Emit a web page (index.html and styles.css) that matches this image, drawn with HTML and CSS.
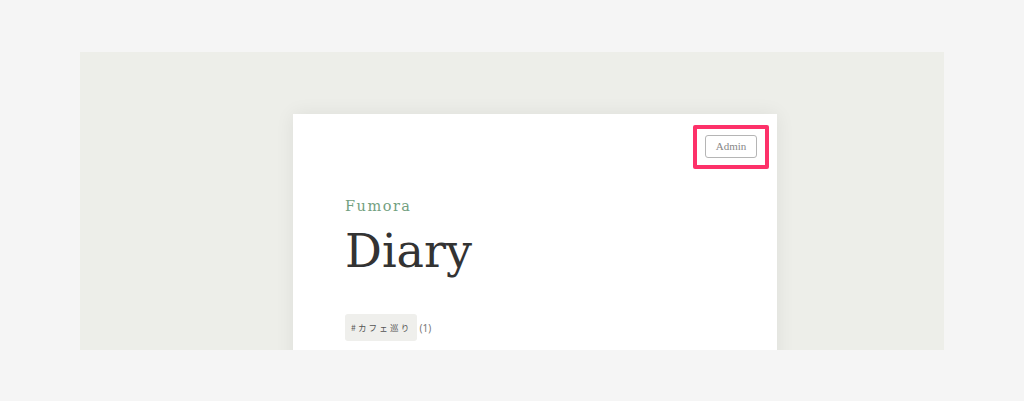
FILE: index.html
```html
<!DOCTYPE html>
<html lang="ja">

<head>
    <meta charset="UTF-8">
    <meta name="viewport" content="width=device-width, initial-scale=1.0">
    <title>Fumora Diary</title>
    <link rel="stylesheet" href="styles.css">
</head>

<body>
    <div class="stage">
        <div class="diary-card">
            <div class="card-top">
                <div class="highlight">
                    <a class="admin-btn" href="#">Admin</a>
                </div>
            </div>

            <p class="site-name">Fumora</p>
            <h1 class="page-title">Diary</h1>

            <div class="tags">
                <a class="tag" href="#">#カフェ巡り</a>
                <span class="tag-count">(1)</span>
            </div>
        </div>
    </div>
</body>

</html>
```

FILE: styles.css
```css
/* Reset */
body,
h1,
p {
    margin: 0;
    padding: 0;
}

body {
    background-color: #f5f5f5;
    padding-top: 52px;
    font-family: "DejaVu Serif", "Liberation Serif", serif;
    color: #333;
}

/* Grey stage */
.stage {
    width: 864px;
    height: 298px;
    margin: 0 auto;
    padding-top: 62px;
    box-sizing: border-box;
    background-color: #edeee9;
    overflow: hidden;
}

/* White card */
.diary-card {
    width: 484px;
    height: 400px;
    margin-left: 213px;
    padding: 11px 8px 0 52px;
    box-sizing: border-box;
    background-color: #fff;
    box-shadow: 0 0 18px rgba(0, 0, 0, 0.07);
}

.card-top {
    display: flex;
    justify-content: flex-end;
}

.highlight {
    border: 4px solid #fd3169;
    border-radius: 2px;
    padding: 6px 8px 7px;
}

.admin-btn {
    display: block;
    width: 52px;
    height: 23px;
    box-sizing: border-box;
    border: 1px solid #b5b5b5;
    border-radius: 3px;
    font-family: "Liberation Serif", serif;
    font-size: 11px;
    line-height: 21px;
    text-align: center;
    color: #888;
    text-decoration: none;
}

/* Heading */
.site-name {
    margin-top: 27px;
    font-size: 14.5px;
    letter-spacing: 1.5px;
    line-height: 20px;
    color: #72a080;
}

.page-title {
    margin-top: 7px;
    font-size: 46px;
    font-weight: normal;
    line-height: 56px;
    color: #333;
}

/* Tags */
.tags {
    margin-top: 35px;
    display: flex;
    align-items: center;
    gap: 2px;
}

.tag {
    display: block;
    height: 27px;
    padding: 0 6px;
    border-radius: 3px;
    background-color: #efefec;
    font-family: "Noto Sans CJK JP", "Noto Sans", sans-serif;
    font-size: 8.5px;
    letter-spacing: 2.2px;
    line-height: 27px;
    color: #555;
    text-decoration: none;
}

.tag-count {
    font-family: "Noto Sans", sans-serif;
    font-size: 10px;
    color: #777;
}
```
